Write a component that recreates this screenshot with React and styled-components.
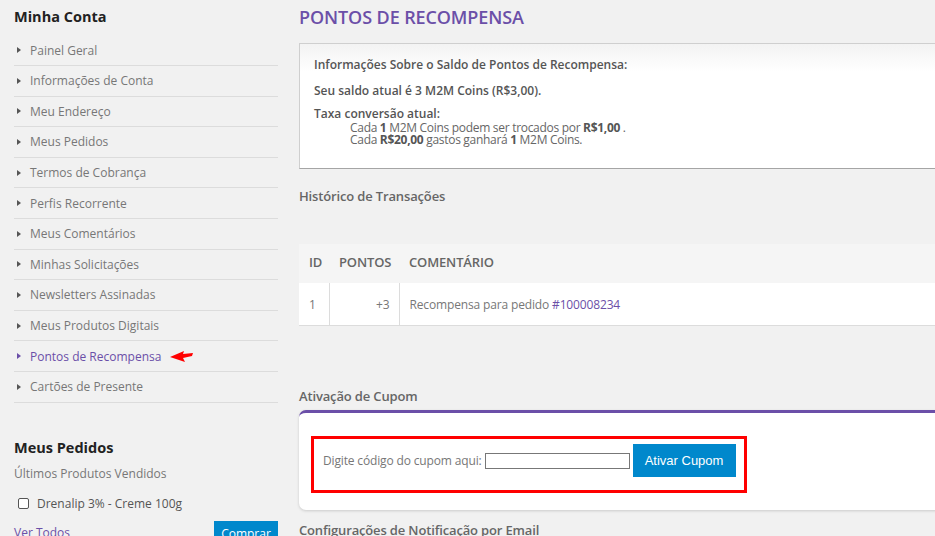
import React from 'react'
import styled, { createGlobalStyle } from 'styled-components'

const GlobalStyle = createGlobalStyle`
  html, body {
    margin: 0;
    padding: 0;
    background: #f1f1f1;
    overflow: hidden;
  }
  body {
    font-family: "Open Sans", "Liberation Sans", sans-serif;
    color: #777;
  }
`

const purple = '#6b4fa8'

const Page = styled.div`
  display: flex;
  align-items: flex-start;
  gap: 21px;
  padding-left: 14px;
  width: 1000px;
  height: 536px;
`

const Sidebar = styled.aside`
  width: 264px;
  flex-shrink: 0;
  padding-top: 7px;
`

const BlockTitle = styled.h3`
  margin: 0;
  font-size: 14.5px;
  line-height: 20px;
  font-weight: 700;
  color: #222;
  margin-top: ${({ $top }) => $top || 0}px;
`

const NavList = styled.ul`
  list-style: none;
  margin: 8.4px 0 0;
  padding: 0;
`

const NavItem = styled.li`
  height: 30.6px;
  box-sizing: border-box;
  display: flex;
  align-items: center;
  gap: 9px;
  padding-left: 3px;
  border-bottom: 1px solid #dcdcdc;
  font-size: 12px;
  color: ${({ $active }) => ($active ? purple : '#777')};
`

const Caret = styled.span`
  width: 0;
  height: 0;
  border-top: 3.5px solid transparent;
  border-bottom: 3.5px solid transparent;
  border-left: 4px solid ${({ $active }) => ($active ? purple : '#555')};
`

const Muted = styled.div`
  font-size: 12px;
  line-height: 18px;
  color: #777;
  margin-top: 7px;
`

const CheckRow = styled.label`
  display: flex;
  align-items: center;
  gap: 8px;
  margin-top: 12px;
  padding-left: 4px;
  font-size: 12px;
  color: #555;
  height: 18px;
`

const Box = styled.span`
  width: 9px;
  height: 9px;
  border: 1px solid #555;
  border-radius: 2px;
  background: #fff;
`

const Actions = styled.div`
  display: flex;
  justify-content: space-between;
  align-items: flex-start;
  margin-top: 8px;
`

const TextLink = styled.a`
  color: ${purple};
  font-size: 12px;
  margin-top: 3px;
  text-decoration: none;
`

const SmallButton = styled.button`
  background: #0088cc;
  border: 0;
  color: #fff;
  font-family: inherit;
  font-size: 12px;
  width: 64px;
  height: 26px;
  padding: 0;
`

const Main = styled.main`
  width: 680px;
  flex-shrink: 0;
  padding-top: 5px;
  letter-spacing: -0.15px;
`

const PageTitle = styled.h1`
  margin: 0;
  font-size: 18px;
  line-height: 24px;
  font-weight: 600;
  color: ${purple};
  letter-spacing: -0.1px;
`

const InfoBox = styled.div`
  margin-top: 14px;
  height: 126px;
  box-sizing: border-box;
  border: 1px solid #cfcfcf;
  border-bottom-color: #a5a5a5;
  background: linear-gradient(#f3f3f3, #fff 28px);
  padding: 13px 14px;
  font-size: 12px;
  color: #555;
`

const InfoLine = styled.p`
  margin: 0 0 ${({ $gap }) => $gap || 0}px;
  line-height: 16px;
  letter-spacing: 0;
  font-weight: ${({ $bold }) => ($bold ? 600 : 400)};
`

const Rate = styled.div`
  line-height: 11.5px;
  padding-left: 36px;
  color: #666;
  letter-spacing: -0.3px;
  b { font-weight: 700; color: #555; }
`

const SectionTitle = styled.h4`
  margin: ${({ $top }) => $top}px 0 0;
  font-size: 13px;
  line-height: 18px;
  font-weight: 600;
  color: #666;
`

const Table = styled.table`
  width: 100%;
  margin-top: 39px;
  border-collapse: collapse;
  table-layout: fixed;
  font-size: 12px;
`

const Th = styled.th`
  background: #f5f5f5;
  height: 39px;
  padding: 0 10px 3px;
  text-align: left;
  font-size: 13px;
  font-weight: 600;
  color: #666;
  width: ${({ $w }) => ($w ? `${$w}px` : 'auto')};
  box-sizing: border-box;
`

const Td = styled.td`
  background: #fff;
  height: 42px;
  padding: 0 ${({ $right }) => ($right ? '9px' : '10px')};
  text-align: ${({ $right }) => ($right ? 'right' : 'left')};
  color: #777;
  border-bottom: 1px solid #dcdcdc;
  border-right: ${({ $sep }) => ($sep ? '1px solid #dcdcdc' : '0')};
  a { color: ${purple}; text-decoration: none; }
`

const CouponCard = styled.div`
  margin-top: 5px;
  background: #fff;
  border-top: 3px solid ${purple};
  border-radius: 7px;
  box-shadow: 0 1px 3px rgba(0, 0, 0, 0.16);
  padding: 23px 12px 17px;
`

const Highlight = styled.div`
  display: inline-flex;
  align-items: center;
  gap: 3px;
  border: 3px solid #f00;
  padding: 5px 8px 13px 9px;
  font-size: 12px;
  color: #777;
`

const CodeInput = styled.input`
  width: 145px;
  height: 16px;
  box-sizing: border-box;
  border: 1px solid #777;
  padding: 0;
`

const BlueButton = styled.button`
  background: #0088cc;
  color: #fff;
  border: 0;
  width: 103px;
  height: 33px;
  font-family: "Liberation Sans", Arial, sans-serif;
  font-size: 13px;
  padding: 0;
`

const Pointer = styled.svg`
  margin-left: 0;
`

const nav = [
  'Painel Geral',
  'Informações de Conta',
  'Meu Endereço',
  'Meus Pedidos',
  'Termos de Cobrança',
  'Perfis Recorrente',
  'Meus Comentários',
  'Minhas Solicitações',
  'Newsletters Assinadas',
  'Meus Produtos Digitais',
  'Pontos de Recompensa',
  'Cartões de Presente',
]

export default function App() {
  return (
    <>
      <GlobalStyle />
      <Page>
        <Sidebar>
          <BlockTitle>Minha Conta</BlockTitle>
          <NavList>
            {nav.map((label) => {
              const active = label === 'Pontos de Recompensa'
              return (
                <NavItem key={label} $active={active}>
                  <Caret $active={active} />
                  {label}
                  {active && (
                    <Pointer width="24" height="12" viewBox="0 0 24 12">
                      <polygon points="0,7 14,1 13,4 23,3 22,6 13,8 15,12" fill="#f00" />
                    </Pointer>
                  )}
                </NavItem>
              )
            })}
          </NavList>
          <BlockTitle $top={35}>Meus Pedidos</BlockTitle>
          <Muted>Últimos Produtos Vendidos</Muted>
          <CheckRow>
            <Box />
            Drenalip 3% - Creme 100g
          </CheckRow>
          <Actions>
            <TextLink href="#">Ver Todos</TextLink>
            <SmallButton>Comprar</SmallButton>
          </Actions>
        </Sidebar>

        <Main>
          <PageTitle>PONTOS DE RECOMPENSA</PageTitle>
          <InfoBox>
            <InfoLine $bold $gap={10}>Informações Sobre o Saldo de Pontos de Recompensa:</InfoLine>
            <InfoLine $bold $gap={7}>Seu saldo atual é 3 M2M Coins (R$3,00).</InfoLine>
            <InfoLine $bold>Taxa conversão atual:</InfoLine>
            <Rate>
              Cada <b>1</b> M2M Coins podem ser trocados por <b>R$1,00</b> .<br />
              Cada <b>R$20,00</b> gastos ganhará <b>1</b> M2M Coins.
            </Rate>
          </InfoBox>

          <SectionTitle $top={18}>Histórico de Transações</SectionTitle>
          <Table>
            <thead>
              <tr>
                <Th $w={30}>ID</Th>
                <Th $w={70}>PONTOS</Th>
                <Th>COMENTÁRIO</Th>
              </tr>
            </thead>
            <tbody>
              <tr>
                <Td $sep>1</Td>
                <Td $sep $right>+3</Td>
                <Td>Recompensa para pedido <a href="#">#100008234</a></Td>
              </tr>
            </tbody>
          </Table>

          <SectionTitle $top={61}>Ativação de Cupom</SectionTitle>
          <CouponCard>
            <Highlight>
              <span>Digite código do cupom aqui:</span>
              <CodeInput type="text" />
              <BlueButton>Ativar Cupom</BlueButton>
            </Highlight>
          </CouponCard>
          <SectionTitle $top={11}>Configurações de Notificação por Email</SectionTitle>
        </Main>
      </Page>
    </>
  )
}
